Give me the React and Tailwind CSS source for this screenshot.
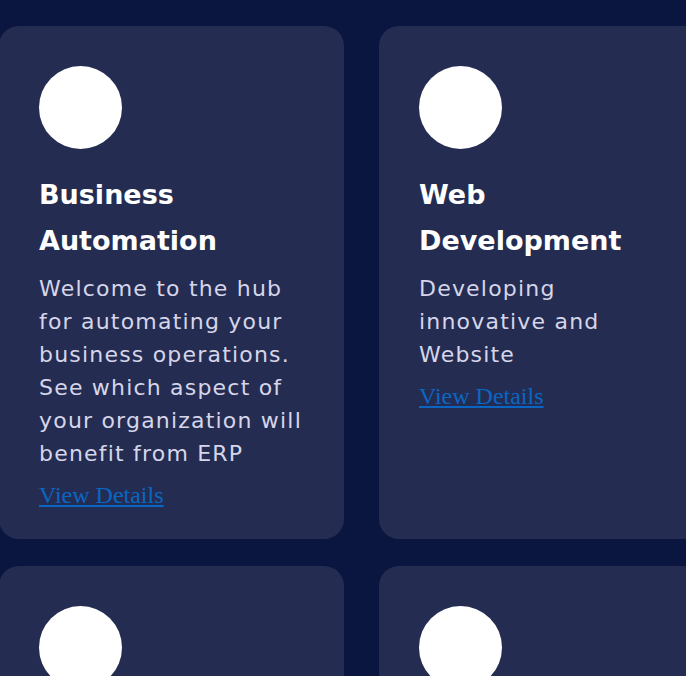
import React from "react";

const cards = [
  {
    title: "Business Automation",
    desc: "Welcome to the hub for automating your business operations. See which aspect of your organization will benefit from ERP",
  },
  { title: "Web Development", desc: "Developing innovative and Website" },
  { title: "Mobile Apps", desc: "Building apps for every device" },
  { title: "Cloud Services", desc: "Scalable hosting and infrastructure" },
];

function Card({ title, desc }) {
  return (
    <div className="bg-[#242d51] rounded-[20px] pt-[40px] px-[40px] pb-[30px] flex flex-col">
      <div className="w-[83px] h-[83px] rounded-full bg-white shrink-0" />
      <h3
        className="mt-[23px] text-[27px] leading-[46px] font-bold text-white"
        style={{ fontFamily: '"DejaVu Sans", sans-serif' }}
      >
        {title}
      </h3>
      <p
        className="mt-[8px] text-[22px] leading-[33px] tracking-[1.2px] text-[#d6d5ea]"
        style={{ fontFamily: '"DejaVu Sans", sans-serif' }}
      >
        {desc}
      </p>
      <a
        href="#"
        className="mt-[12px] text-[24px] leading-[27px] text-[#0a66c2] underline self-start"
        style={{ fontFamily: '"Liberation Serif", serif' }}
      >
        View Details
      </a>
    </div>
  );
}

export default function App() {
  return (
    <div className="w-[686px] h-[676px] overflow-hidden bg-[#0b1640]">
      <div className="grid grid-cols-[345px_345px] gap-x-[35px] gap-y-[27px] pt-[26px] -ml-px">
        {cards.map((c) => (
          <Card key={c.title} {...c} />
        ))}
      </div>
    </div>
  );
}
